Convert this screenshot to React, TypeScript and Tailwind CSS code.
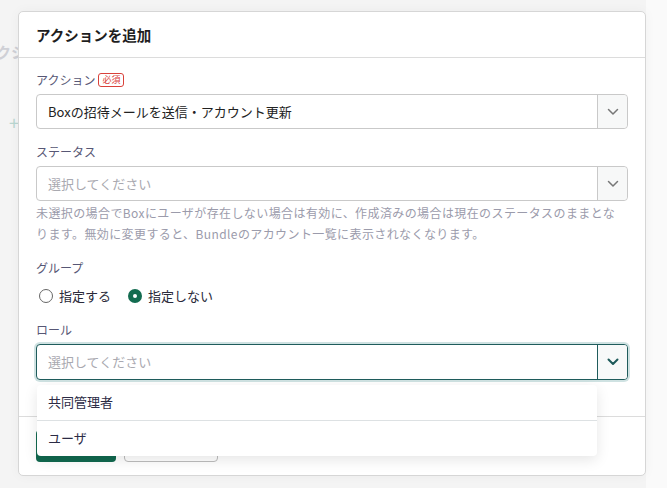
import { ReactNode } from "react";

const font = { fontFamily: '"Noto Sans CJK JP", "Noto Sans", sans-serif' };

function Chevron({ active = false }: { active?: boolean }) {
  return (
    <svg width="12" height="8" viewBox="0 0 12 8" fill="none">
      <path
        d="M1.5 1.5L6 6L10.5 1.5"
        stroke={active ? "#1d5a5a" : "#777"}
        strokeWidth={active ? 2 : 1.5}
        strokeLinecap="round"
        strokeLinejoin="round"
      />
    </svg>
  );
}

function Label({ children }: { children: ReactNode }) {
  return (
    <div className="flex items-center gap-[3px] text-[12px] leading-[18px] text-[#575775]">
      {children}
    </div>
  );
}

function SelectBox({
  value,
  placeholder,
  focused = false,
}: {
  value?: string;
  placeholder?: string;
  focused?: boolean;
}) {
  return (
    <div
      className={
        focused
          ? "flex h-[36px] rounded-[4px] border-[1.5px] border-[#1f5c5c] ring-[2px] ring-[#cfe2e2] bg-white"
          : "flex h-[35px] rounded-[4px] border border-[#c9c9c9] bg-white"
      }
    >
      <div className="flex flex-1 items-center px-[11px] text-[13px]">
        {value ? (
          <span className="text-[#222]">{value}</span>
        ) : (
          <span className="text-[#a9a9b0]">{placeholder}</span>
        )}
      </div>
      <div
        className={
          focused
            ? "flex w-[30px] items-center justify-center border-l-[1.5px] border-[#1f5c5c] bg-[#f7f9f9] rounded-r-[3px]"
            : "flex w-[30px] items-center justify-center border-l border-[#c9c9c9] bg-[#f7f8f8] rounded-r-[4px]"
        }
      >
        <Chevron active={focused} />
      </div>
    </div>
  );
}

function Radio({ checked, label }: { checked: boolean; label: string }) {
  return (
    <label className="flex items-center gap-[6px] text-[13px] text-[#2a2a3a]">
      {checked ? (
        <span className="flex h-[14px] w-[14px] items-center justify-center rounded-full bg-[#136c50]">
          <span className="h-[4px] w-[4px] rounded-full bg-white" />
        </span>
      ) : (
        <span className="h-[14px] w-[14px] rounded-full border-[1.5px] border-[#666]" />
      )}
      {label}
    </label>
  );
}

export default function App() {
  return (
    <div
      className="relative h-[488px] w-[667px] overflow-hidden bg-[#f4f4f4]"
      style={font}
    >
      {/* page behind the dialog */}
      <div className="absolute left-[-4px] top-[41px] text-[15px] font-bold text-[#cfd0d6]">
        クシ
      </div>
      <div className="absolute left-[9px] top-[113px] text-[18px] leading-none text-[#b9d6d0]">
        +
      </div>
      <div className="absolute right-0 top-0 h-full w-[21px] bg-[#fafafa]" />

      <div className="pl-[18px] pt-[11px]">
        <div className="relative flex h-[465px] w-[628px] flex-col rounded-[5px] border border-[#d6d6d6] bg-white shadow-[0_0_12px_rgba(0,0,0,0.04)]">
          {/* header */}
          <div className="flex h-[46px] items-center border-b border-[#dcdcdc] px-[17px]">
            <h2 className="text-[14.5px] font-bold text-[#1e1e1e]">アクションを追加</h2>
          </div>

          {/* body */}
          <div className="flex flex-1 flex-col px-[17px] pt-[13px]">
            <Label>
              アクション
              <span className="rounded-[3px] border border-[#d9413a] px-[3px] text-[9px] leading-[12px] text-[#d9413a]">
                必須
              </span>
            </Label>
            <div className="mt-[5px]">
              <SelectBox value="Boxの招待メールを送信・アカウント更新" />
            </div>

            <div className="mt-[14px]">
              <Label>ステータス</Label>
            </div>
            <div className="mt-[5px]">
              <SelectBox placeholder="選択してください" />
            </div>
            <p className="mt-[1px] text-[12px] leading-[21px] tracking-[0.4px] text-[#9b9bab]">
              未選択の場合でBoxにユーザが存在しない場合は有効に、作成済みの場合は現在のステータスのままとな
              <br />
              ります。無効に変更すると、Bundleのアカウント一覧に表示されなくなります。
            </p>

            <div className="mt-[15px]">
              <Label>グループ</Label>
            </div>
            <div className="mt-[9px] flex items-center gap-[17px] pl-[3px]">
              <Radio checked={false} label="指定する" />
              <Radio checked label="指定しない" />
            </div>

            <div className="mt-[15px]">
              <Label>ロール</Label>
            </div>
            <div className="relative mt-[5px]">
              <SelectBox placeholder="選択してください" focused />
              {/* dropdown menu */}
              <div className="absolute left-[1px] top-[41px] z-10 w-[560px] rounded-[4px] bg-white shadow-[0_4px_14px_rgba(0,0,0,0.10)]">
                <div className="flex h-[36px] items-center border-b border-[#dde1e3] px-[11px] text-[13px] text-[#2b2b45]">
                  共同管理者
                </div>
                <div className="flex h-[35px] items-center px-[11px] text-[13px] text-[#2b2b45]">
                  ユーザ
                </div>
              </div>
            </div>
          </div>

          {/* footer */}
          <div className="flex h-[59px] items-center gap-[8px] border-t border-[#dcdcdc] px-[17px]">
            <button className="h-[32px] w-[80px] rounded-[4px] bg-[#11694f] text-[13px] font-bold text-white">
              追加
            </button>
            <button className="h-[32px] w-[94px] rounded-[4px] border border-[#bdbdbd] bg-white text-[13px] text-[#333]">
              キャンセル
            </button>
          </div>
        </div>
      </div>
    </div>
  );
}
